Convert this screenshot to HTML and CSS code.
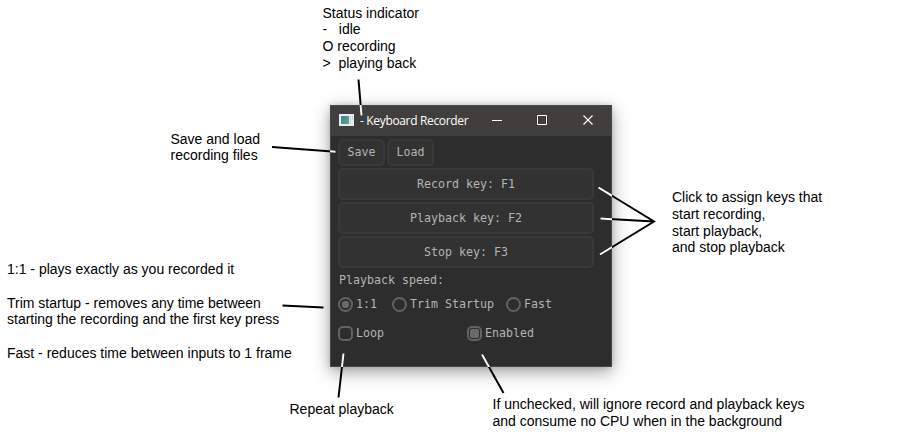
FILE: index.html
```html
<!DOCTYPE html>
<html lang="en">
<head>
<meta charset="utf-8">
<title>Keyboard Recorder</title>
<link rel="stylesheet" href="styles.css">
</head>
<body>
<main class="diagram">
  <section class="window">
    <header class="titlebar">
      <svg class="app-icon" width="16" height="13" viewBox="0 0 16 13">
        <defs><linearGradient id="pane" x1="0" y1="0" x2="1" y2="1"><stop offset="0" stop-color="#4c79ad"/><stop offset="1" stop-color="#58ad78"/></linearGradient></defs>
        <path fill="#e9edef" d="M0 0h15v12H0z"/>
        <path fill="url(#pane)" d="M2 2h8v8H2z"/>
        <path fill="#c5d3d7" d="M11 2h1v8h-1zM13 2h1v4h-1z"/>
      </svg>
      <span class="title">- Keyboard Recorder</span>
      <svg class="controls" width="103" height="12" viewBox="0 0 103 12" fill="none" stroke="#fff">
        <path d="M0 5.5h10M45.500 .5h9v9h-9z"/>
        <path stroke-width="1.200" d="M91.500.5l9 9m0-9l-9 9"/>
      </svg>
    </header>
    <div class="panel">
      <div class="files"><button>Save</button><button>Load</button></div>
      <div class="keys">
        <button>Record key: F1</button>
        <button>Playback key: F2</button>
        <button>Stop key: F3</button>
      </div>
      <p class="label">Playback speed:</p>
      <div class="speeds">
        <span class="option"><i class="radio on"></i>1:1</span>
        <span class="option"><i class="radio"></i>Trim Startup</span>
        <span class="option"><i class="radio"></i>Fast</span>
      </div>
      <div class="toggles">
        <span class="option"><i class="check"></i>Loop</span>
        <span class="option"><i class="check on"></i>Enabled</span>
      </div>
    </div>
  </section>

  <p class="note status">Status indicator
-   idle
O recording
&gt;  playing back</p>
  <p class="note save">Save and load
recording files</p>
  <p class="note assign">Click to assign keys that
start recording,
start playback,
and stop playback</p>
  <p class="note speed">1:1 - plays exactly as you recorded it

Trim startup - removes any time between
starting the recording and the first key press

Fast - reduces time between inputs to 1 frame</p>
  <p class="note repeat">Repeat playback</p>
  <p class="note enabled">If unchecked, will ignore record and playback keys
and consume no CPU when in the background</p>

  <svg class="pointers" width="918" height="436" viewBox="0 0 918 436" fill="none" stroke-width="2">
    <defs>
      <clipPath id="inside"><path d="M330 105h282v262H330z"/></clipPath>
      <path id="lines" d="M358.500 79.500L361.500 115.500M272 147L335.500 151.700M598.500 187.500L654 221.500L600 254.500M600.500 218.500L654 221.500M343.500 353.500L338.500 397.500M482 354.500L503.500 393"/>
    </defs>
    <use href="#lines" stroke="#000"/>
    <path d="M282.500 305.500L323.500 307.500" stroke="#000"/>
    <use href="#lines" stroke="#fff" clip-path="url(#inside)"/>
  </svg>
</main>
</body>
</html>
```
FILE: styles.css
```css
* { box-sizing: border-box; }
body { margin: 0; background: #fff; }
.diagram { position: relative; width: 918px; height: 436px; overflow: hidden; }

.window {
  position: absolute; left: 330px; top: 105px; width: 282px; height: 262px;
  background: #2d2d2d; border: 1px solid #484848;
  box-shadow: 0 5px 16px rgba(0, 0, 0, .38), 0 0 5px rgba(0, 0, 0, .12);
}
.titlebar {
  height: 30px; display: flex; align-items: center; padding-left: 8px;
  background: #403f3d; color: #fff;
  font: 12px/16px "Open Sans", "Noto Sans", sans-serif;
}
.app-icon { margin-top: -1px; }
.title { width: 110px; margin-left: 5px; white-space: nowrap; letter-spacing: -.34px; }
.controls { margin-left: 22px; }

.panel { padding: 3px 7px; color: #b4b4b4; font: 11.63px/13px "DejaVu Sans Mono", monospace; }
.panel button {
  display: block; padding: 0; color: inherit; font: inherit;
  background: #323232; border: 2px solid #393939; border-radius: 5px;
}
.files { display: flex; gap: 2px; }
.files button { width: 47px; height: 27px; }
.keys { display: flex; flex-direction: column; gap: 2px; margin-top: 2px; width: 256px; }
.keys button { height: 32px; }
.label { margin: 6px 0 0 1px; }
.option { display: flex; align-items: center; gap: 3px; height: 15px; white-space: nowrap; }
.speeds { display: flex; margin-top: 10px; }
.speeds .option:first-child { width: 54px; }
.speeds .option:nth-child(2) { width: 114px; }
.toggles { display: grid; grid-template-columns: 129px auto; margin-top: 14px; }
.radio, .check {
  flex: none; width: 15px; height: 15px; border: 2px solid #626262;
  border-radius: 5px; padding: 2px; background-clip: content-box;
}
.radio { border-radius: 50%; }
.check.on { padding: 1px; background-color: #6a6a6a; }
.radio.on { background: radial-gradient(circle, #6a6a6a 3.4px, transparent 4px); }

.note {
  position: absolute; margin: 0; color: #000; white-space: pre;
  font: 14px/16.8px "Liberation Sans", Arial, sans-serif;
}
.status { left: 322.5px; top: 4.6px; }
.save { left: 170.5px; top: 130.6px; }
.assign { left: 672px; top: 189px; }
.speed { left: 7px; top: 261px; }
.repeat { left: 289.5px; top: 401px; }
.enabled { left: 492.5px; top: 396px; }
.pointers { position: absolute; inset: 0; }
```
